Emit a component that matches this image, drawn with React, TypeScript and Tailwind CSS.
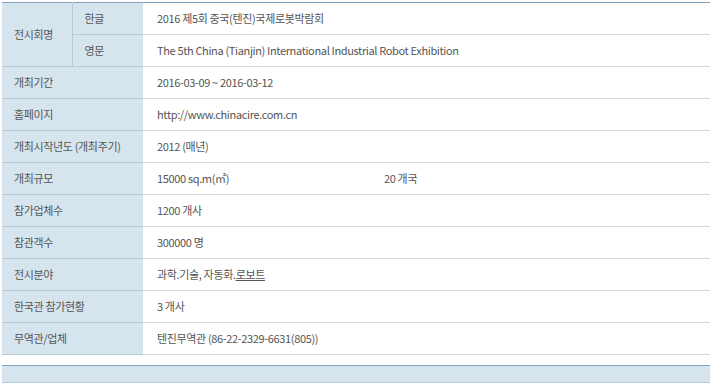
import React from "react";

const rows: { label: string; value: React.ReactNode; extra?: string }[] = [
  { label: "개최기간", value: "2016-03-09 ~ 2016-03-12" },
  { label: "홈페이지", value: "http://www.chinacire.com.cn" },
  { label: "개최시작년도 (개최주기)", value: "2012 (매년)" },
  { label: "개최규모", value: "15000 sq.m(㎡)", extra: "20 개국" },
  { label: "참가업체수", value: "1200 개사" },
  { label: "참관객수", value: "300000 명" },
  {
    label: "전시분야",
    value: (
      <>
        과학.기술, 자동화.<span className="underline">로보트</span>
      </>
    ),
  },
  { label: "한국관 참가현황", value: "3 개사" },
  { label: "무역관/업체", value: "텐진무역관 (86-22-2329-6631(805))" },
];

const th = "bg-[#d6e4ee] text-left font-normal pl-[12px] border-b border-[#b7cad8]";
const td = "pl-[14px] border-b border-[#d9d9d9]";

export default function App() {
  return (
    <div
      className="w-[713px] h-[383px] bg-white pt-[2px] pl-[2px] text-[11px] tracking-[-0.35px] text-[#555]"
      style={{ fontFamily: '"Noto Sans CJK KR", "Noto Sans", sans-serif' }}
    >
      <table className="w-[708px] border-collapse border-t border-[#7fa3bc] table-fixed">
        <colgroup>
          <col className="w-[70px]" />
          <col className="w-[71px]" />
          <col className="w-[227px]" />
          <col />
        </colgroup>
        <tbody>
          <tr className="h-[32px]">
            <th rowSpan={2} className={`${th} border-r border-r-[#b7cad8]`}>
              전시회명
            </th>
            <th className={th}>한글</th>
            <td colSpan={2} className={td}>
              2016 제5회 중국(텐진)국제로봇박람회
            </td>
          </tr>
          <tr className="h-[32px]">
            <th className={th}>영문</th>
            <td colSpan={2} className={td}>
              The 5th China (Tianjin) International Industrial Robot Exhibition
            </td>
          </tr>
          {rows.map((r) => (
            <tr key={r.label} className="h-[32px]">
              <th colSpan={2} className={th}>
                {r.label}
              </th>
              {r.extra ? (
                <>
                  <td className={td}>{r.value}</td>
                  <td className={td}>{r.extra}</td>
                </>
              ) : (
                <td colSpan={2} className={td}>
                  {r.value}
                </td>
              )}
            </tr>
          ))}
        </tbody>
      </table>
      <div className="mt-[10px] h-[18px] w-[708px] bg-[#d6e4ee] border-t border-[#7fa3bc] border-b border-b-[#b7cad8]" />
    </div>
  );
}
